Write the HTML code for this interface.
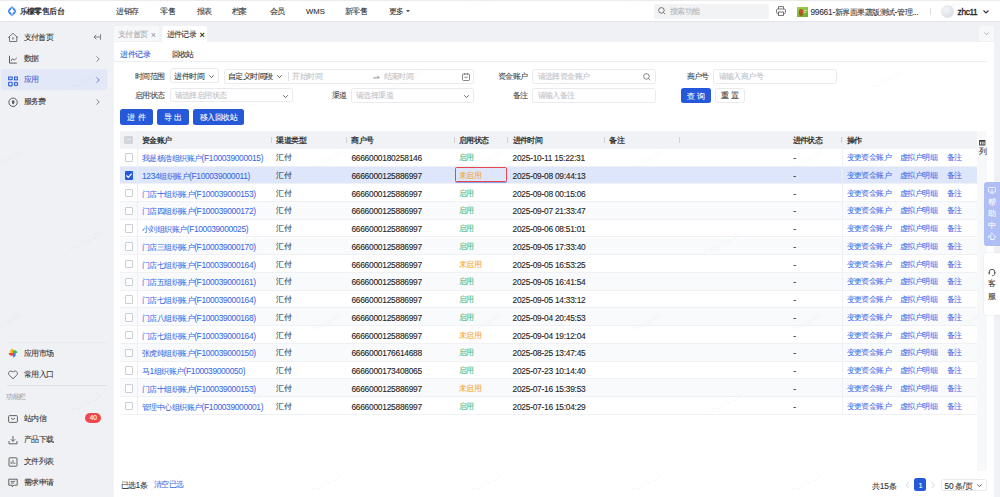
<!DOCTYPE html>
<html><head><meta charset="utf-8"><style>
*{box-sizing:border-box;margin:0;padding:0}
html,body{width:1000px;height:497px;overflow:hidden}
body{position:relative;background:#f0f1f4;font-family:"Liberation Sans",sans-serif;font-size:7.5px;color:#333;-webkit-text-stroke:0.08px}
.a{position:absolute}
.t{position:absolute;line-height:10px;white-space:nowrap;letter-spacing:-0.55px}
.l{letter-spacing:-0.25px;font-size:8.4px;-webkit-text-stroke:0.1px}
.b{font-weight:bold;-webkit-text-stroke:0}
.g{color:#999}
.lk{color:#3566e6;-webkit-text-stroke:0.03px}
.lk .l{-webkit-text-stroke:0.04px;letter-spacing:-0.34px}
.box{position:absolute;background:#fff;border:0.75px solid #e9eaee;border-radius:2.5px}
.btn{position:absolute;background:#2659d9;color:#fff;border-radius:2.5px;text-align:center;letter-spacing:-0.55px;padding-top:0.8px}
.sep{position:absolute;width:0.8px;height:6px;background:#cfd3da}
.hl{position:absolute;height:0.7px;background:#ebedf0}
svg{position:absolute;overflow:visible}
</style></head><body>

<div class="a" style="left:0;top:0;width:1000px;height:22px;background:#fff;border-top:1px solid #ececec;border-bottom:1px solid #e3e5ea"></div>
<svg style="left:8.1px;top:5.8px" width="8" height="10.4" viewBox="0 0 8 10.4"><path d="M4 0 C5.6 2 8 3 8 5.2 C8 7.4 5.6 8.4 4 10.4 C2.4 8.4 0 7.4 0 5.2 C0 3 2.4 2 4 0Z" fill="#3d8af6"/><path d="M4 2.0 Q4.9 4.2 6.6 5.2 Q4.9 6.2 4 8.4 Q3.1 6.2 1.4 5.2 Q3.1 4.2 4 2.0Z" fill="#fff"/><path d="M3.7 0.3L4.1 2.6M4.3 10.1L3.9 7.8" stroke="#fff" stroke-width="0.55"/></svg>
<div class="t b" style="left:19.5px;top:6.70px;color:#333">乐檬零售后台</div>
<div class="t " style="left:116.1px;top:7.00px;color:#333">进销存</div>
<div class="t " style="left:160.2px;top:7.00px;color:#333">零售</div>
<div class="t " style="left:197px;top:7.00px;color:#333">报表</div>
<div class="t " style="left:232px;top:7.00px;color:#333">档案</div>
<div class="t " style="left:270px;top:7.00px;color:#333">会员</div>
<div class="t " style="left:306px;top:6.50px;color:#333;font-size:7.7px;letter-spacing:0;-webkit-text-stroke:0.1px">WMS</div>
<div class="t " style="left:345px;top:7.00px;color:#333">新零售</div>
<div class="t " style="left:389px;top:7.00px;color:#333">更多</div>
<svg style="left:406px;top:10.3px" width="4" height="3" viewBox="0 0 4 3"><path d="M0 0H4L2 2.2Z" fill="#555"/></svg>
<div class="a" style="left:654px;top:3.6px;width:115px;height:15px;background:#f2f3f5;border-radius:2px"></div>
<svg style="left:658px;top:7px" width="8" height="8" viewBox="0 0 8 8"><circle cx="3.4" cy="3.4" r="2.8" fill="none" stroke="#666" stroke-width="0.9"/><path d="M5.5 5.5L7.2 7.2" stroke="#666" stroke-width="0.9"/></svg>
<div class="t " style="left:669.7px;top:6.80px;color:#b5b8bf">搜索功能</div>
<svg style="left:776px;top:6.3px" width="10" height="10" viewBox="0 0 10 10"><path d="M2.5 3V0.6H7.5V3" fill="none" stroke="#666" stroke-width="0.9"/><rect x="0.6" y="3" width="8.8" height="4.6" rx="1" fill="none" stroke="#666" stroke-width="0.9"/><rect x="2.5" y="6" width="5" height="3.4" fill="#fff" stroke="#666" stroke-width="0.9"/></svg>
<div class="a" style="left:797px;top:6.6px;width:11px;height:10.6px;background:linear-gradient(160deg,#a5d04a,#6faa2c)"><div class="a" style="left:1.5px;top:2px;width:4px;height:7.5px;background:#9c5a2c;border-radius:2px"></div><div class="a" style="left:3.2px;top:3px;width:2.5px;height:3px;background:#c8502f;border-radius:1px"></div><div class="a" style="left:6.5px;top:3px;width:3px;height:0.6px;background:#cfe6a0"></div><div class="a" style="left:6.5px;top:5px;width:2.5px;height:0.5px;background:#c5e090"></div></div>
<div class="t " style="left:810.4px;top:7.10px;color:#333"><span class="l">99661-</span>新界面果蔬版测试<span class="l">-</span>管理<span class="l">...</span></div>
<div class="a" style="left:929.6px;top:8px;width:0.8px;height:7px;background:#ddd"></div>
<div class="a" style="left:940.6px;top:5px;width:13px;height:13px;border-radius:50%;background:radial-gradient(circle at 40% 35%,#f4f6f8,#cfd8e0)"></div>
<div class="t" style="left:957.6px;top:7.0px;color:#222;font-size:8.3px;letter-spacing:-0.35px;-webkit-text-stroke:0.3px">zhc11</div>
<svg style="left:982.5px;top:9.5px" width="6" height="4" viewBox="0 0 6 4"><path d="M0.5 0.5L3 3L5.5 0.5" fill="none" stroke="#333" stroke-width="1.1"/></svg>
<div class="a" style="left:1px;top:69px;width:106px;height:21.2px;background:#e3e8f8;border-radius:3px"></div>
<div class="t " style="left:23.5px;top:32.70px;color:#333">支付首页</div>
<div class="t " style="left:23.5px;top:54.00px;color:#333">数据</div>
<div class="t " style="left:23.5px;top:75.00px;color:#3a62d7">应用</div>
<div class="t " style="left:23.5px;top:97.30px;color:#333">服务费</div>
<svg style="left:8px;top:32px" width="10" height="10" viewBox="0 0 10 10"><path d="M0.4 5.5L5 1.3L9.6 5.5" fill="none" stroke="#62656d" stroke-width="0.9" stroke-linecap="round" stroke-linejoin="round"/><path d="M1.5 4.5V9.5H8.8V4.5" fill="none" stroke="#62656d" stroke-width="0.9" stroke-linejoin="round"/><rect x="4.3" y="5" width="1.4" height="2.7" rx="0.7" fill="#7a7d85"/></svg>
<svg style="left:8px;top:53.5px" width="10" height="10" viewBox="0 0 10 10"><path d="M1.5 1.7V9.1H8.8" fill="none" stroke="#5a5d66" stroke-width="1"/><path d="M3 7.1L4.4 4.7L6.35 6L8.8 3.8" fill="none" stroke="#5a5d66" stroke-width="0.9" stroke-linejoin="round"/></svg>
<svg style="left:8px;top:74.5px" width="10" height="12" viewBox="0 0 10 12"><rect x="0.65" y="2.05" width="3.5" height="2.6" fill="none" stroke="#2f5fe0" stroke-width="1.1"/><rect x="6.55" y="2.05" width="2.8" height="2.8" fill="none" stroke="#2f5fe0" stroke-width="1.1"/><rect x="0.65" y="7.25" width="3.5" height="3.6" rx="0.4" fill="none" stroke="#2f5fe0" stroke-width="1.1"/><circle cx="7.95" cy="9.05" r="1.75" fill="none" stroke="#2f5fe0" stroke-width="1.1"/><path d="M7.6 8.3L8.8 9L7.6 9.7Z" fill="#2f5fe0"/></svg>
<svg style="left:8px;top:96.8px" width="10" height="11" viewBox="0 0 10 11"><circle cx="5.06" cy="5.3" r="4.2" fill="none" stroke="#5a5d66" stroke-width="1"/><path d="M3.9 3.6H6.4V5.6Q6.4 6.9 5.15 7.4Q3.9 6.9 3.9 5.6Z" fill="#5a5d66"/></svg>
<svg style="left:93px;top:34px" width="8" height="6" viewBox="0 0 8 6"><path d="M7.5 0.2V5.8M7 3H1M3.3 0.7L1 3L3.3 5.3" fill="none" stroke="#666" stroke-width="0.8"/></svg>
<svg style="left:95.5px;top:55.7px" width="4" height="6" viewBox="0 0 4 6"><path d="M0.6 0.4L3.2 3L0.6 5.6" fill="none" stroke="#666" stroke-width="0.8"/></svg>
<svg style="left:95.5px;top:76.7px" width="4" height="6" viewBox="0 0 4 6"><path d="M0.6 0.4L3.2 3L0.6 5.6" fill="none" stroke="#3a62d7" stroke-width="0.8"/></svg>
<svg style="left:95.5px;top:99.0px" width="4" height="6" viewBox="0 0 4 6"><path d="M0.6 0.4L3.2 3L0.6 5.6" fill="none" stroke="#666" stroke-width="0.8"/></svg>
<div class="a" style="left:6.5px;top:342px;width:100px;height:0.6px;background:#e9eaee"></div>
<div class="a" style="left:6.5px;top:385px;width:100px;height:0.7px;background:#dfe1e6"></div>
<div class="t " style="left:23.8px;top:348.70px;color:#333">应用市场</div>
<div class="t " style="left:23.8px;top:370.10px;color:#333">常用入口</div>
<div class="t " style="left:23.8px;top:413.80px;color:#333">站内信</div>
<div class="t " style="left:23.8px;top:435.30px;color:#333">产品下载</div>
<div class="t " style="left:23.8px;top:456.60px;color:#333">文件列表</div>
<div class="t " style="left:23.8px;top:478.30px;color:#333">需求申请</div>
<div class="t " style="left:6.4px;top:392.10px;color:#a3a6ad;font-size:7px">功能栏</div>
<svg style="left:8.4px;top:348.2px" width="10" height="10" viewBox="0 0 10 10"><path d="M5 5 V0.7 C3.4 0.7 2.3 1.9 2.3 3.3 V5Z" fill="#f7b500"/><path d="M5 5 V0.7 C3.4 0.7 2.3 1.9 2.3 3.3 V5Z" fill="#34b85c" transform="rotate(90 5 5)"/><path d="M5 5 V0.7 C3.4 0.7 2.3 1.9 2.3 3.3 V5Z" fill="#3384f5" transform="rotate(180 5 5)"/><path d="M5 5 V0.7 C3.4 0.7 2.3 1.9 2.3 3.3 V5Z" fill="#f0483e" transform="rotate(270 5 5)"/></svg>
<svg style="left:8.4px;top:369.8px" width="10" height="10" viewBox="0 0 10 10"><path d="M5 8.8L1.3 5.2C-0.2 3.6 0.8 1 3 1C4 1 4.6 1.6 5 2.2C5.4 1.6 6 1 7 1C9.2 1 10.2 3.6 8.7 5.2Z" fill="none" stroke="#555" stroke-width="0.9" stroke-linejoin="round"/></svg>
<svg style="left:8.4px;top:413.8px" width="10" height="10" viewBox="0 0 10 10"><rect x="0.6" y="1.6" width="8.8" height="6.8" rx="0.8" fill="none" stroke="#555" stroke-width="0.9"/><path d="M3 4L5 5.6L7 4" fill="none" stroke="#555" stroke-width="0.9"/></svg>
<div class="a" style="left:85.2px;top:413.3px;width:16.3px;height:9.8px;background:#f0484f;border-radius:5px;color:#fff;font-size:6.5px;line-height:9.8px;text-align:center">40</div>
<svg style="left:8.4px;top:435.3px" width="10" height="10" viewBox="0 0 10 10"><path d="M5 1V6.2M2.8 4.2L5 6.4L7.2 4.2M1 6V8.8H9V6" fill="none" stroke="#555" stroke-width="0.9"/></svg>
<svg style="left:8.4px;top:456.6px" width="10" height="10" viewBox="0 0 10 10"><rect x="1" y="0.8" width="8" height="8.4" rx="0.6" fill="none" stroke="#555" stroke-width="0.9"/><path d="M3.2 7V4.5M5 7V3M6.8 7V5.5" stroke="#555" stroke-width="0.8"/></svg>
<svg style="left:8.4px;top:478.3px" width="10" height="10" viewBox="0 0 10 10"><path d="M0.8 1.2H9.2V7.2H5.8L4.2 8.8V7.2H0.8Z" fill="none" stroke="#555" stroke-width="0.9" stroke-linejoin="round"/><path d="M2.8 3.4H7.2M2.8 5H6" stroke="#555" stroke-width="0.8"/></svg>
<div class="a" style="left:114px;top:26px;width:44.9px;height:15.2px;background:#f7f8fa;border-radius:2px 2px 0 0"></div>
<div class="t " style="left:118px;top:29.70px;color:#a8abb2">支付首页</div>
<div class="t " style="left:150.8px;top:29.50px;color:#9a9da4;font-size:9px">×</div>
<div class="a" style="left:162.4px;top:26px;width:45px;height:16px;background:#fff;border-radius:2px 2px 0 0"></div>
<div class="t " style="left:166.6px;top:29.70px;color:#333">进件记录</div>
<div class="t b" style="left:199.5px;top:29.50px;color:#333;font-size:9px">×</div>
<div class="a" style="left:978.6px;top:26px;width:15px;height:15px;background:#f7f8fa;border-radius:2px"></div>
<svg style="left:983.5px;top:31.5px" width="5" height="3.5" viewBox="0 0 5 3.5"><path d="M0.4 0.4L2.5 2.8L4.6 0.4" fill="none" stroke="#999" stroke-width="0.7"/></svg>
<div class="a" style="left:114px;top:41.5px;width:879.6px;height:456px;background:#fff"></div>
<div class="t " style="left:120.3px;top:50.10px;color:#2d5bd8">进件记录</div>
<div class="a" style="left:120.3px;top:60.8px;width:30px;height:1.3px;background:#2659d9"></div>
<div class="t " style="left:171.6px;top:50.10px;color:#333">回收站</div>
<div class="a" style="left:114px;top:61.0px;width:873px;height:0.8px;background:#eceef2"></div>
<div class="t " style="left:134.8px;top:71.90px;color:#444">时间范围</div>
<div class="box" style="left:170.3px;top:68.3px;width:48.4px;height:14.9px"></div>
<div class="t " style="left:174.3px;top:71.90px;color:#333">进件时间</div>
<svg style="left:209px;top:75px" width="5" height="3" viewBox="0 0 5 3"><path d="M0.3 0.3L2.5 2.6L4.7 0.3" fill="none" stroke="#555" stroke-width="0.9"/></svg>
<div class="box" style="left:223.5px;top:68.6px;width:250.5px;height:15px"></div>
<div class="t " style="left:228px;top:71.90px;color:#333">自定义时间段</div>
<svg style="left:277px;top:75px" width="5" height="3" viewBox="0 0 5 3"><path d="M0.3 0.3L2.5 2.6L4.7 0.3" fill="none" stroke="#555" stroke-width="0.9"/></svg>
<div class="a" style="left:287.6px;top:71.5px;width:0.7px;height:9px;background:#dcdfe6"></div>
<div class="t " style="left:292.4px;top:71.90px;color:#bfc2c8">开始时间</div>
<svg style="left:372.8px;top:74.8px" width="7" height="3.5" viewBox="0 0 7 3.5"><path d="M0.2 2.9H6.3L4.2 0.6" fill="none" stroke="#777" stroke-width="0.8"/></svg>
<div class="t " style="left:383.6px;top:71.90px;color:#bfc2c8">结束时间</div>
<svg style="left:461.6px;top:72.5px" width="8" height="8" viewBox="0 0 8 8"><rect x="0.5" y="1" width="7" height="6.5" rx="1" fill="none" stroke="#666" stroke-width="0.8"/><path d="M2.5 0V1.8M5.5 0V1.8M2.5 4.3H5.5" stroke="#666" stroke-width="0.8"/></svg>
<div class="t " style="left:498px;top:71.90px;color:#444">资金账户</div>
<div class="box" style="left:532.4px;top:68.6px;width:123.2px;height:15px"></div>
<div class="t " style="left:537.6px;top:71.90px;color:#bfc2c8">请选择资金账户</div>
<svg style="left:643px;top:72.5px" width="8" height="8" viewBox="0 0 8 8"><circle cx="3.4" cy="3.4" r="2.8" fill="none" stroke="#666" stroke-width="0.8"/><path d="M5.5 5.5L7.3 7.3" stroke="#666" stroke-width="0.8"/></svg>
<div class="t " style="left:686.6px;top:71.90px;color:#444">商户号</div>
<div class="box" style="left:713.4px;top:68.6px;width:123.2px;height:15px"></div>
<div class="t " style="left:718.5px;top:71.90px;color:#bfc2c8">请输入商户号</div>
<div class="t " style="left:134.8px;top:91.30px;color:#444">启用状态</div>
<div class="box" style="left:170.3px;top:88.3px;width:122.3px;height:14.2px"></div>
<div class="t " style="left:174.6px;top:91.30px;color:#bfc2c8">请选择启用状态</div>
<svg style="left:283px;top:94.5px" width="5" height="3" viewBox="0 0 5 3"><path d="M0.3 0.3L2.5 2.6L4.7 0.3" fill="none" stroke="#555" stroke-width="0.9"/></svg>
<div class="t " style="left:331.6px;top:91.30px;color:#444">渠道</div>
<div class="box" style="left:351.4px;top:88.2px;width:122.6px;height:14.4px"></div>
<div class="t " style="left:356px;top:91.30px;color:#bfc2c8">请选择渠道</div>
<svg style="left:464px;top:94.5px" width="5" height="3" viewBox="0 0 5 3"><path d="M0.3 0.3L2.5 2.6L4.7 0.3" fill="none" stroke="#555" stroke-width="0.9"/></svg>
<div class="t " style="left:513px;top:91.30px;color:#444">备注</div>
<div class="box" style="left:532.4px;top:88.2px;width:123.2px;height:14.4px"></div>
<div class="t " style="left:537.6px;top:91.30px;color:#bfc2c8">请输入备注</div>
<div class="btn" style="left:681px;top:88px;width:29.6px;height:15px;line-height:15px;letter-spacing:2px;padding-left:2px">查询</div>
<div class="box" style="left:715px;top:88px;width:29.6px;height:15px;line-height:14px;text-align:center;letter-spacing:2px;padding-left:2px;color:#333">重置</div>
<div class="btn" style="left:120.3px;top:109.4px;width:32.4px;height:15.4px;line-height:15.4px;letter-spacing:2.8px;padding-left:2.8px">进件</div>
<div class="btn" style="left:157px;top:109.4px;width:32px;height:15.4px;line-height:15.4px;letter-spacing:2.5px;padding-left:2.5px">导出</div>
<div class="btn" style="left:193.3px;top:109.4px;width:50.7px;height:15.4px;line-height:15.4px">移入回收站</div>
<div class="a" style="left:120.4px;top:130.8px;width:856.3px;height:18.0px;background:#f1f2f5"></div>
<div class="a" style="left:976.5px;top:130.8px;width:10.5px;height:340.7px;background:#f7f8fa"></div>
<svg style="left:978.7px;top:139.5px" width="6.4" height="5.4" viewBox="0 0 6.4 5.4"><rect x="0" y="0" width="6.4" height="5.4" rx="0.6" fill="#3a3a3a"/><rect x="0.8" y="1.6" width="1.2" height="3" fill="#e8e0d0"/><rect x="2.6" y="1.6" width="1.2" height="3" fill="#d8dde8"/><rect x="4.4" y="1.6" width="1.2" height="3" fill="#e8e0d0"/></svg>
<div class="t " style="left:978.5px;top:147.10px;color:#333">列</div>
<div class="a" style="left:124.4px;top:135.70px;width:8.6px;height:8.2px;background:#d3d4d7;border-radius:1px"><div class="a" style="left:2.2px;top:3.7px;width:4.2px;height:0.9px;background:#eceded"></div></div>
<div class="t b" style="left:142px;top:135.90px;color:#333">资金账户</div>
<div class="t b" style="left:276.2px;top:135.90px;color:#333">渠道类型</div>
<div class="t b" style="left:351.4px;top:135.90px;color:#333">商户号</div>
<div class="t b" style="left:458.9px;top:135.90px;color:#333">启用状态</div>
<div class="t b" style="left:512.5px;top:135.90px;color:#333">进件时间</div>
<div class="t b" style="left:609.2px;top:135.90px;color:#333">备注</div>
<div class="t b" style="left:792.5px;top:135.90px;color:#333">进件状态</div>
<div class="t b" style="left:846.5px;top:135.90px;color:#333">操作</div>
<div class="sep" style="left:271.0px;top:136.60px"></div>
<div class="sep" style="left:345.8px;top:136.60px"></div>
<div class="sep" style="left:453.8px;top:136.60px"></div>
<div class="sep" style="left:506.9px;top:136.60px"></div>
<div class="sep" style="left:604.1px;top:136.60px"></div>
<div class="sep" style="left:678.6px;top:136.60px"></div>
<div class="sep" style="left:841.0px;top:136.60px"></div>
<div class="a" style="left:120.4px;top:148.80px;width:856.3px;height:17.74px;background:#fff;border-bottom:0.7px solid #f0f1f4"></div>
<div class="a" style="left:124.7px;top:153.37px;width:8.5px;height:8.6px;background:#fff;border:0.9px solid #cbced3;border-radius:1px"></div>
<div class="t lk" style="left:142px;top:153.17px;">我是杨浩组织账户<span class="l">(F100039000015)</span></div>
<div class="t " style="left:276.2px;top:153.17px;color:#333">汇付</div>
<div class="t " style="left:351.4px;top:153.17px;color:#1e1e1e"><span class="l">6666000180258146</span></div>
<div class="t " style="left:458.9px;top:153.17px;color:#4cbb7f">启用</div>
<div class="t " style="left:512.5px;top:153.17px;color:#1e1e1e"><span class="l">2025-10-11 15:22:31</span></div>
<div class="t " style="left:793.2px;top:153.17px;color:#333"><span class="l">-</span></div>
<div class="t lk" style="left:846.5px;top:153.17px;">变更资金账户</div>
<div class="t lk" style="left:900px;top:153.17px;">虚拟户明细</div>
<div class="t lk" style="left:946.5px;top:153.17px;">备注</div>
<div class="a" style="left:120.4px;top:166.54px;width:856.3px;height:17.74px;background:#dde6fa;border-bottom:0.7px solid #f0f1f4"></div>
<div class="a" style="left:124.7px;top:171.11px;width:8.5px;height:8.6px;background:#2659d9;border-radius:1px"></div>
<svg style="left:126px;top:172.61px" width="6" height="5" viewBox="0 0 6 5"><path d="M0.4 2.5L2.3 4.3L5.7 0.6" fill="none" stroke="#fff" stroke-width="1.2"/></svg>
<div class="t lk" style="left:142px;top:170.91px;"><span class="l">1234</span>组织账户<span class="l">(F100039000011)</span></div>
<div class="t " style="left:276.2px;top:170.91px;color:#333">汇付</div>
<div class="t " style="left:351.4px;top:170.91px;color:#1e1e1e"><span class="l">6666000125886997</span></div>
<div class="t " style="left:458.9px;top:170.91px;color:#f3a73b">未启用</div>
<div class="t " style="left:512.5px;top:170.91px;color:#1e1e1e"><span class="l">2025-09-08 09:44:13</span></div>
<div class="t " style="left:793.2px;top:170.91px;color:#333"><span class="l">-</span></div>
<div class="t lk" style="left:846.5px;top:170.91px;">变更资金账户</div>
<div class="t lk" style="left:900px;top:170.91px;">虚拟户明细</div>
<div class="t lk" style="left:946.5px;top:170.91px;">备注</div>
<div class="a" style="left:120.4px;top:184.28px;width:856.3px;height:17.74px;background:#fff;border-bottom:0.7px solid #f0f1f4"></div>
<div class="a" style="left:124.7px;top:188.85px;width:8.5px;height:8.6px;background:#fff;border:0.9px solid #cbced3;border-radius:1px"></div>
<div class="t lk" style="left:142px;top:188.65px;">门店十组织账户<span class="l">(F100039000153)</span></div>
<div class="t " style="left:276.2px;top:188.65px;color:#333">汇付</div>
<div class="t " style="left:351.4px;top:188.65px;color:#1e1e1e"><span class="l">6666000125886997</span></div>
<div class="t " style="left:458.9px;top:188.65px;color:#4cbb7f">启用</div>
<div class="t " style="left:512.5px;top:188.65px;color:#1e1e1e"><span class="l">2025-09-08 00:15:06</span></div>
<div class="t " style="left:793.2px;top:188.65px;color:#333"><span class="l">-</span></div>
<div class="t lk" style="left:846.5px;top:188.65px;">变更资金账户</div>
<div class="t lk" style="left:900px;top:188.65px;">虚拟户明细</div>
<div class="t lk" style="left:946.5px;top:188.65px;">备注</div>
<div class="a" style="left:120.4px;top:202.02px;width:856.3px;height:17.74px;background:#f9fafb;border-bottom:0.7px solid #f0f1f4"></div>
<div class="a" style="left:124.7px;top:206.59px;width:8.5px;height:8.6px;background:#fff;border:0.9px solid #cbced3;border-radius:1px"></div>
<div class="t lk" style="left:142px;top:206.39px;">门店四组织账户<span class="l">(F100039000172)</span></div>
<div class="t " style="left:276.2px;top:206.39px;color:#333">汇付</div>
<div class="t " style="left:351.4px;top:206.39px;color:#1e1e1e"><span class="l">6666000125886997</span></div>
<div class="t " style="left:458.9px;top:206.39px;color:#4cbb7f">启用</div>
<div class="t " style="left:512.5px;top:206.39px;color:#1e1e1e"><span class="l">2025-09-07 21:33:47</span></div>
<div class="t " style="left:793.2px;top:206.39px;color:#333"><span class="l">-</span></div>
<div class="t lk" style="left:846.5px;top:206.39px;">变更资金账户</div>
<div class="t lk" style="left:900px;top:206.39px;">虚拟户明细</div>
<div class="t lk" style="left:946.5px;top:206.39px;">备注</div>
<div class="a" style="left:120.4px;top:219.76px;width:856.3px;height:17.74px;background:#fff;border-bottom:0.7px solid #f0f1f4"></div>
<div class="a" style="left:124.7px;top:224.33px;width:8.5px;height:8.6px;background:#fff;border:0.9px solid #cbced3;border-radius:1px"></div>
<div class="t lk" style="left:142px;top:224.13px;">小刘组织账户<span class="l">(F100039000025)</span></div>
<div class="t " style="left:276.2px;top:224.13px;color:#333">汇付</div>
<div class="t " style="left:351.4px;top:224.13px;color:#1e1e1e"><span class="l">6666000125886997</span></div>
<div class="t " style="left:458.9px;top:224.13px;color:#4cbb7f">启用</div>
<div class="t " style="left:512.5px;top:224.13px;color:#1e1e1e"><span class="l">2025-09-06 08:51:01</span></div>
<div class="t " style="left:793.2px;top:224.13px;color:#333"><span class="l">-</span></div>
<div class="t lk" style="left:846.5px;top:224.13px;">变更资金账户</div>
<div class="t lk" style="left:900px;top:224.13px;">虚拟户明细</div>
<div class="t lk" style="left:946.5px;top:224.13px;">备注</div>
<div class="a" style="left:120.4px;top:237.50px;width:856.3px;height:17.74px;background:#f9fafb;border-bottom:0.7px solid #f0f1f4"></div>
<div class="a" style="left:124.7px;top:242.07px;width:8.5px;height:8.6px;background:#fff;border:0.9px solid #cbced3;border-radius:1px"></div>
<div class="t lk" style="left:142px;top:241.87px;">门店三组织账户<span class="l">(F100039000170)</span></div>
<div class="t " style="left:276.2px;top:241.87px;color:#333">汇付</div>
<div class="t " style="left:351.4px;top:241.87px;color:#1e1e1e"><span class="l">6666000125886997</span></div>
<div class="t " style="left:458.9px;top:241.87px;color:#4cbb7f">启用</div>
<div class="t " style="left:512.5px;top:241.87px;color:#1e1e1e"><span class="l">2025-09-05 17:33:40</span></div>
<div class="t " style="left:793.2px;top:241.87px;color:#333"><span class="l">-</span></div>
<div class="t lk" style="left:846.5px;top:241.87px;">变更资金账户</div>
<div class="t lk" style="left:900px;top:241.87px;">虚拟户明细</div>
<div class="t lk" style="left:946.5px;top:241.87px;">备注</div>
<div class="a" style="left:120.4px;top:255.24px;width:856.3px;height:17.74px;background:#fff;border-bottom:0.7px solid #f0f1f4"></div>
<div class="a" style="left:124.7px;top:259.81px;width:8.5px;height:8.6px;background:#fff;border:0.9px solid #cbced3;border-radius:1px"></div>
<div class="t lk" style="left:142px;top:259.61px;">门店七组织账户<span class="l">(F100039000164)</span></div>
<div class="t " style="left:276.2px;top:259.61px;color:#333">汇付</div>
<div class="t " style="left:351.4px;top:259.61px;color:#1e1e1e"><span class="l">6666000125886997</span></div>
<div class="t " style="left:458.9px;top:259.61px;color:#f3a73b">未启用</div>
<div class="t " style="left:512.5px;top:259.61px;color:#1e1e1e"><span class="l">2025-09-05 16:53:25</span></div>
<div class="t " style="left:793.2px;top:259.61px;color:#333"><span class="l">-</span></div>
<div class="t lk" style="left:846.5px;top:259.61px;">变更资金账户</div>
<div class="t lk" style="left:900px;top:259.61px;">虚拟户明细</div>
<div class="t lk" style="left:946.5px;top:259.61px;">备注</div>
<div class="a" style="left:120.4px;top:272.98px;width:856.3px;height:17.74px;background:#f9fafb;border-bottom:0.7px solid #f0f1f4"></div>
<div class="a" style="left:124.7px;top:277.55px;width:8.5px;height:8.6px;background:#fff;border:0.9px solid #cbced3;border-radius:1px"></div>
<div class="t lk" style="left:142px;top:277.35px;">门店五组织账户<span class="l">(F100039000161)</span></div>
<div class="t " style="left:276.2px;top:277.35px;color:#333">汇付</div>
<div class="t " style="left:351.4px;top:277.35px;color:#1e1e1e"><span class="l">6666000125886997</span></div>
<div class="t " style="left:458.9px;top:277.35px;color:#4cbb7f">启用</div>
<div class="t " style="left:512.5px;top:277.35px;color:#1e1e1e"><span class="l">2025-09-05 16:41:54</span></div>
<div class="t " style="left:793.2px;top:277.35px;color:#333"><span class="l">-</span></div>
<div class="t lk" style="left:846.5px;top:277.35px;">变更资金账户</div>
<div class="t lk" style="left:900px;top:277.35px;">虚拟户明细</div>
<div class="t lk" style="left:946.5px;top:277.35px;">备注</div>
<div class="a" style="left:120.4px;top:290.72px;width:856.3px;height:17.74px;background:#fff;border-bottom:0.7px solid #f0f1f4"></div>
<div class="a" style="left:124.7px;top:295.29px;width:8.5px;height:8.6px;background:#fff;border:0.9px solid #cbced3;border-radius:1px"></div>
<div class="t lk" style="left:142px;top:295.09px;">门店七组织账户<span class="l">(F100039000164)</span></div>
<div class="t " style="left:276.2px;top:295.09px;color:#333">汇付</div>
<div class="t " style="left:351.4px;top:295.09px;color:#1e1e1e"><span class="l">6666000125886997</span></div>
<div class="t " style="left:458.9px;top:295.09px;color:#4cbb7f">启用</div>
<div class="t " style="left:512.5px;top:295.09px;color:#1e1e1e"><span class="l">2025-09-05 14:33:12</span></div>
<div class="t " style="left:793.2px;top:295.09px;color:#333"><span class="l">-</span></div>
<div class="t lk" style="left:846.5px;top:295.09px;">变更资金账户</div>
<div class="t lk" style="left:900px;top:295.09px;">虚拟户明细</div>
<div class="t lk" style="left:946.5px;top:295.09px;">备注</div>
<div class="a" style="left:120.4px;top:308.46px;width:856.3px;height:17.74px;background:#f9fafb;border-bottom:0.7px solid #f0f1f4"></div>
<div class="a" style="left:124.7px;top:313.03px;width:8.5px;height:8.6px;background:#fff;border:0.9px solid #cbced3;border-radius:1px"></div>
<div class="t lk" style="left:142px;top:312.83px;">门店八组织账户<span class="l">(F100039000168)</span></div>
<div class="t " style="left:276.2px;top:312.83px;color:#333">汇付</div>
<div class="t " style="left:351.4px;top:312.83px;color:#1e1e1e"><span class="l">6666000125886997</span></div>
<div class="t " style="left:458.9px;top:312.83px;color:#4cbb7f">启用</div>
<div class="t " style="left:512.5px;top:312.83px;color:#1e1e1e"><span class="l">2025-09-04 20:45:53</span></div>
<div class="t " style="left:793.2px;top:312.83px;color:#333"><span class="l">-</span></div>
<div class="t lk" style="left:846.5px;top:312.83px;">变更资金账户</div>
<div class="t lk" style="left:900px;top:312.83px;">虚拟户明细</div>
<div class="t lk" style="left:946.5px;top:312.83px;">备注</div>
<div class="a" style="left:120.4px;top:326.20px;width:856.3px;height:17.74px;background:#fff;border-bottom:0.7px solid #f0f1f4"></div>
<div class="a" style="left:124.7px;top:330.77px;width:8.5px;height:8.6px;background:#fff;border:0.9px solid #cbced3;border-radius:1px"></div>
<div class="t lk" style="left:142px;top:330.57px;">门店七组织账户<span class="l">(F100039000164)</span></div>
<div class="t " style="left:276.2px;top:330.57px;color:#333">汇付</div>
<div class="t " style="left:351.4px;top:330.57px;color:#1e1e1e"><span class="l">6666000125886997</span></div>
<div class="t " style="left:458.9px;top:330.57px;color:#f3a73b">未启用</div>
<div class="t " style="left:512.5px;top:330.57px;color:#1e1e1e"><span class="l">2025-09-04 19:12:04</span></div>
<div class="t " style="left:793.2px;top:330.57px;color:#333"><span class="l">-</span></div>
<div class="t lk" style="left:846.5px;top:330.57px;">变更资金账户</div>
<div class="t lk" style="left:900px;top:330.57px;">虚拟户明细</div>
<div class="t lk" style="left:946.5px;top:330.57px;">备注</div>
<div class="a" style="left:120.4px;top:343.94px;width:856.3px;height:17.74px;background:#f9fafb;border-bottom:0.7px solid #f0f1f4"></div>
<div class="a" style="left:124.7px;top:348.51px;width:8.5px;height:8.6px;background:#fff;border:0.9px solid #cbced3;border-radius:1px"></div>
<div class="t lk" style="left:142px;top:348.31px;">张虎纯组织账户<span class="l">(F100039000150)</span></div>
<div class="t " style="left:276.2px;top:348.31px;color:#333">汇付</div>
<div class="t " style="left:351.4px;top:348.31px;color:#1e1e1e"><span class="l">6666000176614688</span></div>
<div class="t " style="left:458.9px;top:348.31px;color:#4cbb7f">启用</div>
<div class="t " style="left:512.5px;top:348.31px;color:#1e1e1e"><span class="l">2025-08-25 13:47:45</span></div>
<div class="t " style="left:793.2px;top:348.31px;color:#333"><span class="l">-</span></div>
<div class="t lk" style="left:846.5px;top:348.31px;">变更资金账户</div>
<div class="t lk" style="left:900px;top:348.31px;">虚拟户明细</div>
<div class="t lk" style="left:946.5px;top:348.31px;">备注</div>
<div class="a" style="left:120.4px;top:361.68px;width:856.3px;height:17.74px;background:#fff;border-bottom:0.7px solid #f0f1f4"></div>
<div class="a" style="left:124.7px;top:366.25px;width:8.5px;height:8.6px;background:#fff;border:0.9px solid #cbced3;border-radius:1px"></div>
<div class="t lk" style="left:142px;top:366.05px;">马<span class="l">1</span>组织账户<span class="l">(F100039000050)</span></div>
<div class="t " style="left:276.2px;top:366.05px;color:#333">汇付</div>
<div class="t " style="left:351.4px;top:366.05px;color:#1e1e1e"><span class="l">6666000173408065</span></div>
<div class="t " style="left:458.9px;top:366.05px;color:#4cbb7f">启用</div>
<div class="t " style="left:512.5px;top:366.05px;color:#1e1e1e"><span class="l">2025-07-23 10:14:40</span></div>
<div class="t " style="left:793.2px;top:366.05px;color:#333"><span class="l">-</span></div>
<div class="t lk" style="left:846.5px;top:366.05px;">变更资金账户</div>
<div class="t lk" style="left:900px;top:366.05px;">虚拟户明细</div>
<div class="t lk" style="left:946.5px;top:366.05px;">备注</div>
<div class="a" style="left:120.4px;top:379.42px;width:856.3px;height:17.74px;background:#f9fafb;border-bottom:0.7px solid #f0f1f4"></div>
<div class="a" style="left:124.7px;top:383.99px;width:8.5px;height:8.6px;background:#fff;border:0.9px solid #cbced3;border-radius:1px"></div>
<div class="t lk" style="left:142px;top:383.79px;">门店十组织账户<span class="l">(F100039000153)</span></div>
<div class="t " style="left:276.2px;top:383.79px;color:#333">汇付</div>
<div class="t " style="left:351.4px;top:383.79px;color:#1e1e1e"><span class="l">6666000125886997</span></div>
<div class="t " style="left:458.9px;top:383.79px;color:#f3a73b">未启用</div>
<div class="t " style="left:512.5px;top:383.79px;color:#1e1e1e"><span class="l">2025-07-16 15:39:53</span></div>
<div class="t " style="left:793.2px;top:383.79px;color:#333"><span class="l">-</span></div>
<div class="t lk" style="left:846.5px;top:383.79px;">变更资金账户</div>
<div class="t lk" style="left:900px;top:383.79px;">虚拟户明细</div>
<div class="t lk" style="left:946.5px;top:383.79px;">备注</div>
<div class="a" style="left:120.4px;top:397.16px;width:856.3px;height:17.74px;background:#fff;border-bottom:0.7px solid #f0f1f4"></div>
<div class="a" style="left:124.7px;top:401.73px;width:8.5px;height:8.6px;background:#fff;border:0.9px solid #cbced3;border-radius:1px"></div>
<div class="t lk" style="left:142px;top:401.53px;">管理中心组织账户<span class="l">(F100039000001)</span></div>
<div class="t " style="left:276.2px;top:401.53px;color:#333">汇付</div>
<div class="t " style="left:351.4px;top:401.53px;color:#1e1e1e"><span class="l">6666000125886997</span></div>
<div class="t " style="left:458.9px;top:401.53px;color:#4cbb7f">启用</div>
<div class="t " style="left:512.5px;top:401.53px;color:#1e1e1e"><span class="l">2025-07-16 15:04:29</span></div>
<div class="t " style="left:793.2px;top:401.53px;color:#333"><span class="l">-</span></div>
<div class="t lk" style="left:846.5px;top:401.53px;">变更资金账户</div>
<div class="t lk" style="left:900px;top:401.53px;">虚拟户明细</div>
<div class="t lk" style="left:946.5px;top:401.53px;">备注</div>
<div class="a" style="left:137.2px;top:130.8px;width:0.7px;height:284.10px;background:#eceef1"></div>
<div class="a" style="left:841.5px;top:130.8px;width:0.7px;height:284.10px;background:#eff0f3"></div>
<div class="a" style="left:454.9px;top:167.44px;width:52.4px;height:15px;border:1.2px solid #e4484e;border-radius:1.5px;box-shadow:0 0.8px 0 #6f86e0"></div>
<div class="t " style="left:120.5px;top:480.00px;color:#333">已选<span class="l">1</span>条</div>
<div class="t lk" style="left:154px;top:480.00px;">清空已选</div>
<div class="t " style="left:872.3px;top:480.50px;color:#333">共<span class="l">15</span>条</div>
<svg style="left:905px;top:481.8px" width="4.5" height="6.5" viewBox="0 0 4.5 6.5"><path d="M4 0.4L1 3.25L4 6.1" fill="none" stroke="#c5c8ce" stroke-width="0.8"/></svg>
<div class="btn" style="left:913.9px;top:478px;width:12.6px;height:13px;line-height:13px;font-size:7.5px">1</div>
<svg style="left:931px;top:481.8px" width="4.5" height="6.5" viewBox="0 0 4.5 6.5"><path d="M0.5 0.4L3.5 3.25L0.5 6.1" fill="none" stroke="#c5c8ce" stroke-width="0.8"/></svg>
<div class="box" style="left:940.5px;top:478.6px;width:46.2px;height:12.6px"></div>
<div class="t " style="left:944.5px;top:480.50px;color:#333"><span class="l">50 </span>条<span class="l">/</span>页</div>
<svg style="left:976.5px;top:483.6px" width="5" height="3" viewBox="0 0 5 3"><path d="M0.3 0.3L2.5 2.6L4.7 0.3" fill="none" stroke="#555" stroke-width="0.9"/></svg>
<div class="a" style="left:984.3px;top:182.3px;width:16px;height:63.5px;background:#b0bef6;border-radius:3px 0 0 3px"></div>
<svg style="left:987.8px;top:186.5px" width="8" height="7" viewBox="0 0 8 7"><rect x="0.5" y="0.5" width="7" height="4.6" rx="0.8" fill="none" stroke="#fff" stroke-width="0.8"/><path d="M2.5 6.3H5.5M2.8 3.2H5" stroke="#fff" stroke-width="0.7"/></svg>
<div class="t" style="left:988.3px;top:196.6px;width:8px;line-height:11.6px;color:#fff;white-space:normal;font-size:7.5px">帮助中心</div>
<div class="a" style="left:984.3px;top:253px;width:16px;height:62.2px;background:#fff;border-radius:3px 0 0 3px;box-shadow:0 0 2px rgba(0,0,0,0.12)"></div>
<svg style="left:988px;top:267.8px" width="8" height="8.5" viewBox="0 0 8 8"><path d="M1.2 4.6V3.8A2.8 2.8 0 0 1 6.8 3.8V4.6" fill="none" stroke="#444" stroke-width="0.9"/><rect x="0.6" y="3.8" width="1.2" height="2.2" rx="0.5" fill="#444"/><rect x="6.2" y="3.8" width="1.2" height="2.2" rx="0.5" fill="#444"/><path d="M6.6 6Q6 7.6 4 7.6" fill="none" stroke="#444" stroke-width="0.8"/></svg>
<div class="t" style="left:988.3px;top:276.8px;width:8px;line-height:13px;color:#333;white-space:normal;font-size:7.5px">客服</div>
<div class="a" style="left:-100.0px;top:-84.7px;width:50px;height:8px;line-height:8px;text-align:center;font-size:7.2px;color:rgba(0,0,0,0.06);-webkit-text-stroke:0;transform:rotate(-28deg);pointer-events:none">zhc115204</div>
<div class="a" style="left:60.0px;top:-84.7px;width:50px;height:8px;line-height:8px;text-align:center;font-size:7.2px;color:rgba(0,0,0,0.06);-webkit-text-stroke:0;transform:rotate(-28deg);pointer-events:none">zhc115204</div>
<div class="a" style="left:220.0px;top:-84.7px;width:50px;height:8px;line-height:8px;text-align:center;font-size:7.2px;color:rgba(0,0,0,0.06);-webkit-text-stroke:0;transform:rotate(-28deg);pointer-events:none">zhc115204</div>
<div class="a" style="left:380.0px;top:-84.7px;width:50px;height:8px;line-height:8px;text-align:center;font-size:7.2px;color:rgba(0,0,0,0.06);-webkit-text-stroke:0;transform:rotate(-28deg);pointer-events:none">zhc115204</div>
<div class="a" style="left:540.0px;top:-84.7px;width:50px;height:8px;line-height:8px;text-align:center;font-size:7.2px;color:rgba(0,0,0,0.06);-webkit-text-stroke:0;transform:rotate(-28deg);pointer-events:none">zhc115204</div>
<div class="a" style="left:700.0px;top:-84.7px;width:50px;height:8px;line-height:8px;text-align:center;font-size:7.2px;color:rgba(0,0,0,0.06);-webkit-text-stroke:0;transform:rotate(-28deg);pointer-events:none">zhc115204</div>
<div class="a" style="left:860.0px;top:-84.7px;width:50px;height:8px;line-height:8px;text-align:center;font-size:7.2px;color:rgba(0,0,0,0.06);-webkit-text-stroke:0;transform:rotate(-28deg);pointer-events:none">zhc115204</div>
<div class="a" style="left:1020.0px;top:-84.7px;width:50px;height:8px;line-height:8px;text-align:center;font-size:7.2px;color:rgba(0,0,0,0.06);-webkit-text-stroke:0;transform:rotate(-28deg);pointer-events:none">zhc115204</div>
<div class="a" style="left:-180.0px;top:-4.0px;width:50px;height:8px;line-height:8px;text-align:center;font-size:7.2px;color:rgba(0,0,0,0.06);-webkit-text-stroke:0;transform:rotate(-28deg);pointer-events:none">zhc115204</div>
<div class="a" style="left:-20.0px;top:-4.0px;width:50px;height:8px;line-height:8px;text-align:center;font-size:7.2px;color:rgba(0,0,0,0.06);-webkit-text-stroke:0;transform:rotate(-28deg);pointer-events:none">zhc115204</div>
<div class="a" style="left:140.0px;top:-4.0px;width:50px;height:8px;line-height:8px;text-align:center;font-size:7.2px;color:rgba(0,0,0,0.06);-webkit-text-stroke:0;transform:rotate(-28deg);pointer-events:none">zhc115204</div>
<div class="a" style="left:300.0px;top:-4.0px;width:50px;height:8px;line-height:8px;text-align:center;font-size:7.2px;color:rgba(0,0,0,0.06);-webkit-text-stroke:0;transform:rotate(-28deg);pointer-events:none">zhc115204</div>
<div class="a" style="left:460.0px;top:-4.0px;width:50px;height:8px;line-height:8px;text-align:center;font-size:7.2px;color:rgba(0,0,0,0.06);-webkit-text-stroke:0;transform:rotate(-28deg);pointer-events:none">zhc115204</div>
<div class="a" style="left:620.0px;top:-4.0px;width:50px;height:8px;line-height:8px;text-align:center;font-size:7.2px;color:rgba(0,0,0,0.06);-webkit-text-stroke:0;transform:rotate(-28deg);pointer-events:none">zhc115204</div>
<div class="a" style="left:780.0px;top:-4.0px;width:50px;height:8px;line-height:8px;text-align:center;font-size:7.2px;color:rgba(0,0,0,0.06);-webkit-text-stroke:0;transform:rotate(-28deg);pointer-events:none">zhc115204</div>
<div class="a" style="left:940.0px;top:-4.0px;width:50px;height:8px;line-height:8px;text-align:center;font-size:7.2px;color:rgba(0,0,0,0.06);-webkit-text-stroke:0;transform:rotate(-28deg);pointer-events:none">zhc115204</div>
<div class="a" style="left:-100.0px;top:76.7px;width:50px;height:8px;line-height:8px;text-align:center;font-size:7.2px;color:rgba(0,0,0,0.06);-webkit-text-stroke:0;transform:rotate(-28deg);pointer-events:none">zhc115204</div>
<div class="a" style="left:60.0px;top:76.7px;width:50px;height:8px;line-height:8px;text-align:center;font-size:7.2px;color:rgba(0,0,0,0.06);-webkit-text-stroke:0;transform:rotate(-28deg);pointer-events:none">zhc115204</div>
<div class="a" style="left:220.0px;top:76.7px;width:50px;height:8px;line-height:8px;text-align:center;font-size:7.2px;color:rgba(0,0,0,0.06);-webkit-text-stroke:0;transform:rotate(-28deg);pointer-events:none">zhc115204</div>
<div class="a" style="left:380.0px;top:76.7px;width:50px;height:8px;line-height:8px;text-align:center;font-size:7.2px;color:rgba(0,0,0,0.06);-webkit-text-stroke:0;transform:rotate(-28deg);pointer-events:none">zhc115204</div>
<div class="a" style="left:540.0px;top:76.7px;width:50px;height:8px;line-height:8px;text-align:center;font-size:7.2px;color:rgba(0,0,0,0.06);-webkit-text-stroke:0;transform:rotate(-28deg);pointer-events:none">zhc115204</div>
<div class="a" style="left:700.0px;top:76.7px;width:50px;height:8px;line-height:8px;text-align:center;font-size:7.2px;color:rgba(0,0,0,0.06);-webkit-text-stroke:0;transform:rotate(-28deg);pointer-events:none">zhc115204</div>
<div class="a" style="left:860.0px;top:76.7px;width:50px;height:8px;line-height:8px;text-align:center;font-size:7.2px;color:rgba(0,0,0,0.06);-webkit-text-stroke:0;transform:rotate(-28deg);pointer-events:none">zhc115204</div>
<div class="a" style="left:1020.0px;top:76.7px;width:50px;height:8px;line-height:8px;text-align:center;font-size:7.2px;color:rgba(0,0,0,0.06);-webkit-text-stroke:0;transform:rotate(-28deg);pointer-events:none">zhc115204</div>
<div class="a" style="left:-180.0px;top:157.4px;width:50px;height:8px;line-height:8px;text-align:center;font-size:7.2px;color:rgba(0,0,0,0.06);-webkit-text-stroke:0;transform:rotate(-28deg);pointer-events:none">zhc115204</div>
<div class="a" style="left:-20.0px;top:157.4px;width:50px;height:8px;line-height:8px;text-align:center;font-size:7.2px;color:rgba(0,0,0,0.06);-webkit-text-stroke:0;transform:rotate(-28deg);pointer-events:none">zhc115204</div>
<div class="a" style="left:140.0px;top:157.4px;width:50px;height:8px;line-height:8px;text-align:center;font-size:7.2px;color:rgba(0,0,0,0.06);-webkit-text-stroke:0;transform:rotate(-28deg);pointer-events:none">zhc115204</div>
<div class="a" style="left:300.0px;top:157.4px;width:50px;height:8px;line-height:8px;text-align:center;font-size:7.2px;color:rgba(0,0,0,0.06);-webkit-text-stroke:0;transform:rotate(-28deg);pointer-events:none">zhc115204</div>
<div class="a" style="left:460.0px;top:157.4px;width:50px;height:8px;line-height:8px;text-align:center;font-size:7.2px;color:rgba(0,0,0,0.06);-webkit-text-stroke:0;transform:rotate(-28deg);pointer-events:none">zhc115204</div>
<div class="a" style="left:620.0px;top:157.4px;width:50px;height:8px;line-height:8px;text-align:center;font-size:7.2px;color:rgba(0,0,0,0.06);-webkit-text-stroke:0;transform:rotate(-28deg);pointer-events:none">zhc115204</div>
<div class="a" style="left:780.0px;top:157.4px;width:50px;height:8px;line-height:8px;text-align:center;font-size:7.2px;color:rgba(0,0,0,0.06);-webkit-text-stroke:0;transform:rotate(-28deg);pointer-events:none">zhc115204</div>
<div class="a" style="left:940.0px;top:157.4px;width:50px;height:8px;line-height:8px;text-align:center;font-size:7.2px;color:rgba(0,0,0,0.06);-webkit-text-stroke:0;transform:rotate(-28deg);pointer-events:none">zhc115204</div>
<div class="a" style="left:-100.0px;top:238.1px;width:50px;height:8px;line-height:8px;text-align:center;font-size:7.2px;color:rgba(0,0,0,0.06);-webkit-text-stroke:0;transform:rotate(-28deg);pointer-events:none">zhc115204</div>
<div class="a" style="left:60.0px;top:238.1px;width:50px;height:8px;line-height:8px;text-align:center;font-size:7.2px;color:rgba(0,0,0,0.06);-webkit-text-stroke:0;transform:rotate(-28deg);pointer-events:none">zhc115204</div>
<div class="a" style="left:220.0px;top:238.1px;width:50px;height:8px;line-height:8px;text-align:center;font-size:7.2px;color:rgba(0,0,0,0.06);-webkit-text-stroke:0;transform:rotate(-28deg);pointer-events:none">zhc115204</div>
<div class="a" style="left:380.0px;top:238.1px;width:50px;height:8px;line-height:8px;text-align:center;font-size:7.2px;color:rgba(0,0,0,0.06);-webkit-text-stroke:0;transform:rotate(-28deg);pointer-events:none">zhc115204</div>
<div class="a" style="left:540.0px;top:238.1px;width:50px;height:8px;line-height:8px;text-align:center;font-size:7.2px;color:rgba(0,0,0,0.06);-webkit-text-stroke:0;transform:rotate(-28deg);pointer-events:none">zhc115204</div>
<div class="a" style="left:700.0px;top:238.1px;width:50px;height:8px;line-height:8px;text-align:center;font-size:7.2px;color:rgba(0,0,0,0.06);-webkit-text-stroke:0;transform:rotate(-28deg);pointer-events:none">zhc115204</div>
<div class="a" style="left:860.0px;top:238.1px;width:50px;height:8px;line-height:8px;text-align:center;font-size:7.2px;color:rgba(0,0,0,0.06);-webkit-text-stroke:0;transform:rotate(-28deg);pointer-events:none">zhc115204</div>
<div class="a" style="left:1020.0px;top:238.1px;width:50px;height:8px;line-height:8px;text-align:center;font-size:7.2px;color:rgba(0,0,0,0.06);-webkit-text-stroke:0;transform:rotate(-28deg);pointer-events:none">zhc115204</div>
<div class="a" style="left:-180.0px;top:318.8px;width:50px;height:8px;line-height:8px;text-align:center;font-size:7.2px;color:rgba(0,0,0,0.06);-webkit-text-stroke:0;transform:rotate(-28deg);pointer-events:none">zhc115204</div>
<div class="a" style="left:-20.0px;top:318.8px;width:50px;height:8px;line-height:8px;text-align:center;font-size:7.2px;color:rgba(0,0,0,0.06);-webkit-text-stroke:0;transform:rotate(-28deg);pointer-events:none">zhc115204</div>
<div class="a" style="left:140.0px;top:318.8px;width:50px;height:8px;line-height:8px;text-align:center;font-size:7.2px;color:rgba(0,0,0,0.06);-webkit-text-stroke:0;transform:rotate(-28deg);pointer-events:none">zhc115204</div>
<div class="a" style="left:300.0px;top:318.8px;width:50px;height:8px;line-height:8px;text-align:center;font-size:7.2px;color:rgba(0,0,0,0.06);-webkit-text-stroke:0;transform:rotate(-28deg);pointer-events:none">zhc115204</div>
<div class="a" style="left:460.0px;top:318.8px;width:50px;height:8px;line-height:8px;text-align:center;font-size:7.2px;color:rgba(0,0,0,0.06);-webkit-text-stroke:0;transform:rotate(-28deg);pointer-events:none">zhc115204</div>
<div class="a" style="left:620.0px;top:318.8px;width:50px;height:8px;line-height:8px;text-align:center;font-size:7.2px;color:rgba(0,0,0,0.06);-webkit-text-stroke:0;transform:rotate(-28deg);pointer-events:none">zhc115204</div>
<div class="a" style="left:780.0px;top:318.8px;width:50px;height:8px;line-height:8px;text-align:center;font-size:7.2px;color:rgba(0,0,0,0.06);-webkit-text-stroke:0;transform:rotate(-28deg);pointer-events:none">zhc115204</div>
<div class="a" style="left:940.0px;top:318.8px;width:50px;height:8px;line-height:8px;text-align:center;font-size:7.2px;color:rgba(0,0,0,0.06);-webkit-text-stroke:0;transform:rotate(-28deg);pointer-events:none">zhc115204</div>
<div class="a" style="left:-100.0px;top:399.5px;width:50px;height:8px;line-height:8px;text-align:center;font-size:7.2px;color:rgba(0,0,0,0.06);-webkit-text-stroke:0;transform:rotate(-28deg);pointer-events:none">zhc115204</div>
<div class="a" style="left:60.0px;top:399.5px;width:50px;height:8px;line-height:8px;text-align:center;font-size:7.2px;color:rgba(0,0,0,0.06);-webkit-text-stroke:0;transform:rotate(-28deg);pointer-events:none">zhc115204</div>
<div class="a" style="left:220.0px;top:399.5px;width:50px;height:8px;line-height:8px;text-align:center;font-size:7.2px;color:rgba(0,0,0,0.06);-webkit-text-stroke:0;transform:rotate(-28deg);pointer-events:none">zhc115204</div>
<div class="a" style="left:380.0px;top:399.5px;width:50px;height:8px;line-height:8px;text-align:center;font-size:7.2px;color:rgba(0,0,0,0.06);-webkit-text-stroke:0;transform:rotate(-28deg);pointer-events:none">zhc115204</div>
<div class="a" style="left:540.0px;top:399.5px;width:50px;height:8px;line-height:8px;text-align:center;font-size:7.2px;color:rgba(0,0,0,0.06);-webkit-text-stroke:0;transform:rotate(-28deg);pointer-events:none">zhc115204</div>
<div class="a" style="left:700.0px;top:399.5px;width:50px;height:8px;line-height:8px;text-align:center;font-size:7.2px;color:rgba(0,0,0,0.06);-webkit-text-stroke:0;transform:rotate(-28deg);pointer-events:none">zhc115204</div>
<div class="a" style="left:860.0px;top:399.5px;width:50px;height:8px;line-height:8px;text-align:center;font-size:7.2px;color:rgba(0,0,0,0.06);-webkit-text-stroke:0;transform:rotate(-28deg);pointer-events:none">zhc115204</div>
<div class="a" style="left:1020.0px;top:399.5px;width:50px;height:8px;line-height:8px;text-align:center;font-size:7.2px;color:rgba(0,0,0,0.06);-webkit-text-stroke:0;transform:rotate(-28deg);pointer-events:none">zhc115204</div>
<div class="a" style="left:-180.0px;top:480.2px;width:50px;height:8px;line-height:8px;text-align:center;font-size:7.2px;color:rgba(0,0,0,0.06);-webkit-text-stroke:0;transform:rotate(-28deg);pointer-events:none">zhc115204</div>
<div class="a" style="left:-20.0px;top:480.2px;width:50px;height:8px;line-height:8px;text-align:center;font-size:7.2px;color:rgba(0,0,0,0.06);-webkit-text-stroke:0;transform:rotate(-28deg);pointer-events:none">zhc115204</div>
<div class="a" style="left:140.0px;top:480.2px;width:50px;height:8px;line-height:8px;text-align:center;font-size:7.2px;color:rgba(0,0,0,0.06);-webkit-text-stroke:0;transform:rotate(-28deg);pointer-events:none">zhc115204</div>
<div class="a" style="left:300.0px;top:480.2px;width:50px;height:8px;line-height:8px;text-align:center;font-size:7.2px;color:rgba(0,0,0,0.06);-webkit-text-stroke:0;transform:rotate(-28deg);pointer-events:none">zhc115204</div>
<div class="a" style="left:460.0px;top:480.2px;width:50px;height:8px;line-height:8px;text-align:center;font-size:7.2px;color:rgba(0,0,0,0.06);-webkit-text-stroke:0;transform:rotate(-28deg);pointer-events:none">zhc115204</div>
<div class="a" style="left:620.0px;top:480.2px;width:50px;height:8px;line-height:8px;text-align:center;font-size:7.2px;color:rgba(0,0,0,0.06);-webkit-text-stroke:0;transform:rotate(-28deg);pointer-events:none">zhc115204</div>
<div class="a" style="left:780.0px;top:480.2px;width:50px;height:8px;line-height:8px;text-align:center;font-size:7.2px;color:rgba(0,0,0,0.06);-webkit-text-stroke:0;transform:rotate(-28deg);pointer-events:none">zhc115204</div>
<div class="a" style="left:940.0px;top:480.2px;width:50px;height:8px;line-height:8px;text-align:center;font-size:7.2px;color:rgba(0,0,0,0.06);-webkit-text-stroke:0;transform:rotate(-28deg);pointer-events:none">zhc115204</div>
<div class="a" style="left:-100.0px;top:560.9px;width:50px;height:8px;line-height:8px;text-align:center;font-size:7.2px;color:rgba(0,0,0,0.06);-webkit-text-stroke:0;transform:rotate(-28deg);pointer-events:none">zhc115204</div>
<div class="a" style="left:60.0px;top:560.9px;width:50px;height:8px;line-height:8px;text-align:center;font-size:7.2px;color:rgba(0,0,0,0.06);-webkit-text-stroke:0;transform:rotate(-28deg);pointer-events:none">zhc115204</div>
<div class="a" style="left:220.0px;top:560.9px;width:50px;height:8px;line-height:8px;text-align:center;font-size:7.2px;color:rgba(0,0,0,0.06);-webkit-text-stroke:0;transform:rotate(-28deg);pointer-events:none">zhc115204</div>
<div class="a" style="left:380.0px;top:560.9px;width:50px;height:8px;line-height:8px;text-align:center;font-size:7.2px;color:rgba(0,0,0,0.06);-webkit-text-stroke:0;transform:rotate(-28deg);pointer-events:none">zhc115204</div>
<div class="a" style="left:540.0px;top:560.9px;width:50px;height:8px;line-height:8px;text-align:center;font-size:7.2px;color:rgba(0,0,0,0.06);-webkit-text-stroke:0;transform:rotate(-28deg);pointer-events:none">zhc115204</div>
<div class="a" style="left:700.0px;top:560.9px;width:50px;height:8px;line-height:8px;text-align:center;font-size:7.2px;color:rgba(0,0,0,0.06);-webkit-text-stroke:0;transform:rotate(-28deg);pointer-events:none">zhc115204</div>
<div class="a" style="left:860.0px;top:560.9px;width:50px;height:8px;line-height:8px;text-align:center;font-size:7.2px;color:rgba(0,0,0,0.06);-webkit-text-stroke:0;transform:rotate(-28deg);pointer-events:none">zhc115204</div>
<div class="a" style="left:1020.0px;top:560.9px;width:50px;height:8px;line-height:8px;text-align:center;font-size:7.2px;color:rgba(0,0,0,0.06);-webkit-text-stroke:0;transform:rotate(-28deg);pointer-events:none">zhc115204</div>
</body></html>
